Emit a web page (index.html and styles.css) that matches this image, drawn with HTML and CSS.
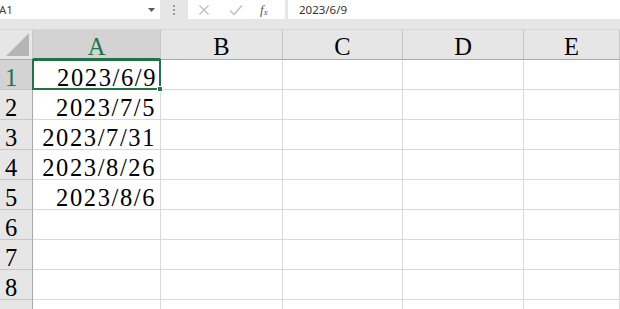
FILE: index.html
```html
<!DOCTYPE html>
<html>
<head>
<meta charset="utf-8">
<link rel="stylesheet" href="styles.css">
</head>
<body>
<div class="app">
  <div class="fbar">
    <div class="namebox">
      <span class="nb-text">A1</span>
      <svg class="nb-arrow" width="7" height="4" viewBox="0 0 7 4"><path d="M0 0H7L3.5 4Z" fill="#5a5a5a"/></svg>
    </div>
    <div class="grip"><i></i><i></i><i></i></div>
    <div class="fnbox">
      <svg class="ic" width="12" height="12" viewBox="0 0 12 12"><path d="M1.5 1.5L10.5 10.5M10.5 1.5L1.5 10.5" stroke="#bdbdbd" stroke-width="1.3" fill="none"/></svg>
      <svg class="ic" width="14" height="12" viewBox="0 0 14 12"><path d="M1 6.5L5 10.5L13 1.5" stroke="#bdbdbd" stroke-width="1.4" fill="none"/></svg>
      <span class="fx">f<sub>x</sub></span>
    </div>
    <div class="finput">2023/6/9</div>
  </div>
  <div class="sheet">
    <div class="corner"><span class="tri"></span></div>
    <div class="ch sel">A</div>
    <div class="ch">B</div>
    <div class="ch">C</div>
    <div class="ch">D</div>
    <div class="ch">E</div>

    <div class="rh sel">1</div>
    <div class="c num active">2023/6/9<span class="handle"></span></div>
    <div class="c"></div><div class="c"></div><div class="c"></div><div class="c"></div>

    <div class="rh">2</div>
    <div class="c num">2023/7/5</div>
    <div class="c"></div><div class="c"></div><div class="c"></div><div class="c"></div>

    <div class="rh">3</div>
    <div class="c num">2023/7/31</div>
    <div class="c"></div><div class="c"></div><div class="c"></div><div class="c"></div>

    <div class="rh">4</div>
    <div class="c num">2023/8/26</div>
    <div class="c"></div><div class="c"></div><div class="c"></div><div class="c"></div>

    <div class="rh">5</div>
    <div class="c num">2023/8/6</div>
    <div class="c"></div><div class="c"></div><div class="c"></div><div class="c"></div>

    <div class="rh">6</div>
    <div class="c"></div><div class="c"></div><div class="c"></div><div class="c"></div><div class="c"></div>

    <div class="rh">7</div>
    <div class="c"></div><div class="c"></div><div class="c"></div><div class="c"></div><div class="c"></div>

    <div class="rh">8</div>
    <div class="c"></div><div class="c"></div><div class="c"></div><div class="c"></div><div class="c"></div>

    <div class="rh last"></div>
    <div class="c"></div><div class="c"></div><div class="c"></div><div class="c"></div><div class="c"></div>
  </div>
</div>
</body>
</html>
```

FILE: styles.css
```css
* { box-sizing: border-box; }
html, body { margin: 0; padding: 0; }
body {
  width: 620px;
  height: 309px;
  overflow: hidden;
  background: #ffffff;
}
.app {
  width: 620px;
  height: 309px;
  overflow: hidden;
  background: #e6e6e6;
}
.fbar {
  height: 30px;
  display: flex;
  align-items: flex-start;
  background: #e6e6e6;
  border-bottom: 1px solid #d6d6d6;
  font-family: "Noto Sans", "Liberation Sans", sans-serif;
  font-size: 11.5px;
  color: #444;
}
.namebox {
  width: 161px;
  height: 19px;
  background: #fff;
  display: flex;
  align-items: center;
  justify-content: space-between;
  padding: 0 5px 0 0;
  margin-left: -1px;
}
.nb-text { line-height: 19px; }
.grip {
  width: 28px;
  height: 19px;
  display: flex;
  flex-direction: column;
  align-items: center;
  justify-content: center;
  gap: 2px;
}
.grip i {
  display: block;
  width: 2px;
  height: 2px;
  background: #9a9a9a;
}
.fnbox {
  width: 97px;
  height: 19px;
  background: #fff;
  display: flex;
  align-items: center;
  padding-left: 10px;
  gap: 19px;
}
.fx {
  font-family: "Liberation Serif", serif;
  font-style: italic;
  font-size: 13px;
  color: #555;
  margin-left: -2px;
}
.fx sub { font-size: 9px; vertical-align: -1px; }
.finput {
  flex: 1;
  height: 19px;
  margin-left: 3px;
  background: #fff;
  line-height: 19px;
  padding-left: 11px;
  color: #333;
}
.sheet {
  display: grid;
  grid-template-columns: 33px 128px 122px 120px 121px 96px;
  grid-auto-rows: 30px;
  background: #fff;
  font-family: "Liberation Serif", "Times New Roman", serif;
  font-size: 24.5px;
  color: #000;
}
.corner {
  background: #e6e6e6;
  border-right: 1px solid #c8c8c8;
  border-bottom: 1px solid #a8a8a8;
  position: relative;
}
.tri {
  position: absolute;
  right: 3px;
  bottom: 3px;
  width: 0;
  height: 0;
  border-left: 23px solid transparent;
  border-bottom: 23px solid #b5b5b5;
}
.ch {
  background: #e6e6e6;
  border-right: 1px solid #c6c6c6;
  border-bottom: 1px solid #a8a8a8;
  text-align: center;
  line-height: 24px;
  padding-top: 5px;
}
.ch.sel {
  background: #d3d3d3;
  color: #217346;
  border-bottom: 2px solid #217346;
}
.rh {
  background: #e6e6e6;
  border-right: 1px solid #a8a8a8;
  border-bottom: 1px solid #c6c6c6;
  padding-left: 5px;
  line-height: 24px;
  padding-top: 6px;
}
.rh.sel {
  background: #d3d3d3;
  color: #217346;
}
.c {
  border-right: 1px solid #d9d9d9;
  border-bottom: 1px solid #d9d9d9;
  line-height: 24px;
  padding-top: 6px;
}
.num {
  text-align: right;
  padding-right: 4px;
  letter-spacing: 1.6px;
}
.active {
  position: relative;
  border: 2px solid #217346;
  margin: -1px 0 0 -1px;
  padding-top: 5px;
  padding-right: 2px;
}
.handle {
  position: absolute;
  right: -4px;
  bottom: -4px;
  width: 6px;
  height: 6px;
  background: #217346;
  border: 1px solid #fff;
}
```
